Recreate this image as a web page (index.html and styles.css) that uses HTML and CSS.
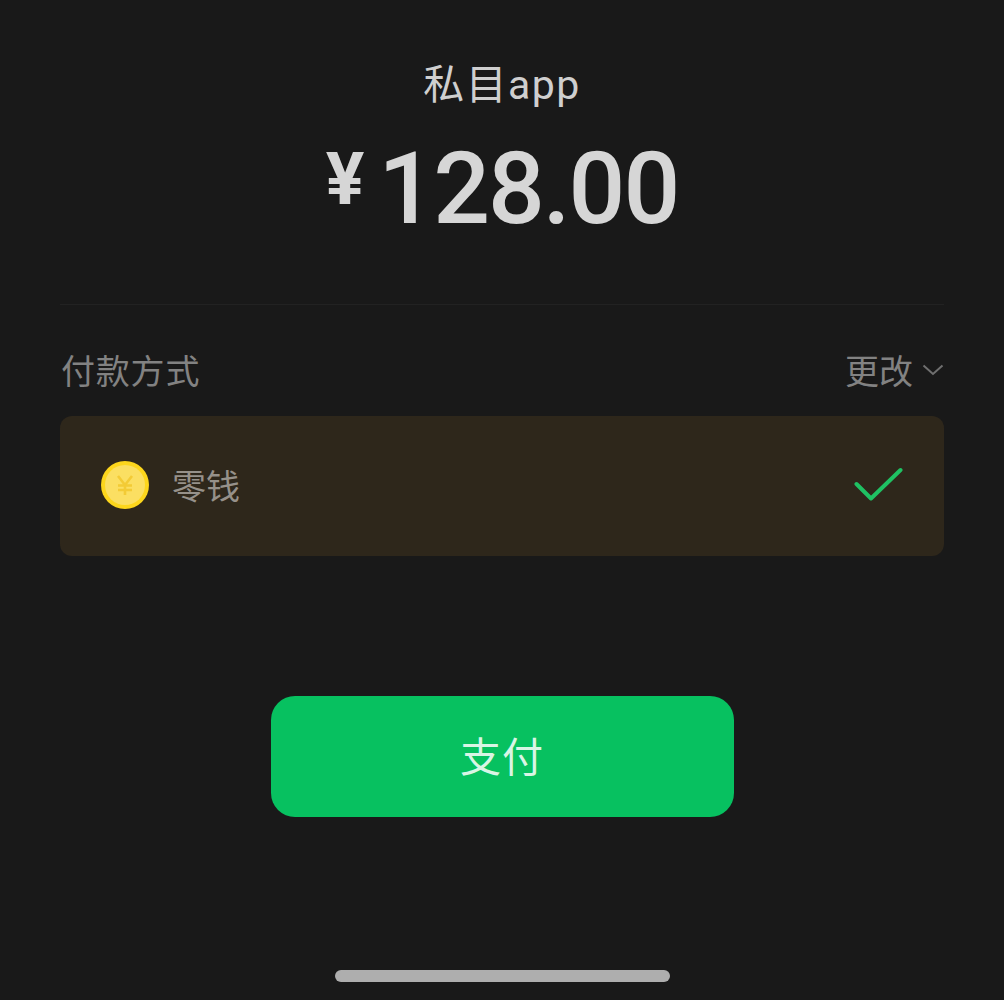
FILE: index.html
```html
<!DOCTYPE html>
<html lang="zh">
<head>
<meta charset="utf-8">
<title>支付</title>
<link rel="stylesheet" href="styles.css">
</head>
<body>
<main class="page">
  <header class="summary">
    <h1 class="merchant">私目app</h1>
    <div class="amount"><span class="currency">¥</span><span class="value">128.00</span></div>
  </header>
  <section class="method">
    <div class="method-head">
      <span class="method-title">付款方式</span>
      <span class="change">更改
        <svg class="chevron" width="22" height="12" viewBox="0 0 22 12"><path d="M1.5 1.5 L11 10 L20.5 1.5" fill="none" stroke="#6f6f6f" stroke-width="2"/></svg>
      </span>
    </div>
    <div class="wallet">
      <svg class="coin" width="48" height="48" viewBox="0 0 48 48">
        <circle cx="24" cy="24" r="24" fill="#fdd61c"/>
        <circle cx="24" cy="24" r="20" fill="#fbdf62"/>
        <path d="M17 15 L24 24 L31 15 M24 24 V34 M17 24.5 H31 M17 29 H31" fill="none" stroke="#f3cb35" stroke-width="2.6"/>
      </svg>
      <span class="wallet-name">零钱</span>
      <svg class="check" width="50" height="38" viewBox="0 0 50 38"><path d="M2.5 17 L17 31.500 L46.500 3" fill="none" stroke="#1fc163" stroke-width="4" stroke-linecap="round" stroke-linejoin="round"/></svg>
    </div>
  </section>
  <div class="actions"><button class="pay" type="button"><span class="pay-label">支付</span></button></div>
  <div class="home-indicator"></div>
</main>
</body>
</html>
```
FILE: styles.css
```css
* { box-sizing: border-box; }
html, body { margin: 0; height: 100%; }
body {
  background: #191919;
  font-family: "Noto Sans CJK SC", Roboto, sans-serif;
  overflow: hidden;
}
.page {
  height: 1000px;
  padding: 0 60px;
  display: flex;
  flex-direction: column;
}
.summary {
  height: 305px;
  padding-top: 58px;
  border-bottom: 1px solid #222222;
  display: flex;
  flex-direction: column;
  align-items: center;
}
.merchant {
  margin: 0;
  font-family: Roboto, "Noto Sans CJK SC", sans-serif;
  font-size: 41px;
  line-height: 54px;
  font-weight: 400;
  letter-spacing: 1.4px;
  color: #cfcfcf;
}
.amount {
  margin-top: 25px;
  display: flex;
  align-items: flex-start;
  color: #d6d6d6;
  font-family: Roboto, sans-serif;
  line-height: 104px;
}
.currency {
  font-size: 72px;
  font-weight: 700;
  line-height: 76px;
  margin-top: 5px;
  margin-right: 14px;
}
.value {
  font-size: 100px;
  font-weight: 500;
  letter-spacing: -2px;
}
.method-head {
  margin-top: 38px;
  height: 54px;
  display: flex;
  justify-content: space-between;
  align-items: center;
  font-size: 34px;
  line-height: 54px;
  color: #828282;
}
.method-title { letter-spacing: 0.8px; margin-left: 1px; }
.change {
  display: flex;
  align-items: center;
  gap: 9px;
}
.wallet {
  margin-top: 19px;
  height: 140px;
  border-radius: 12px;
  background: #2e271b;
  padding: 0 40px 2px 41px;
  display: flex;
  align-items: center;
}
.coin { flex: none; }
.check { flex: none; margin-top: 2px; }
.wallet-name {
  margin-left: 23px;
  margin-top: -1px;
  flex: 1;
  font-size: 34px;
  color: #96918a;
}
.actions {
  margin-top: 140px;
  display: flex;
  justify-content: center;
}
.pay {
  width: 463px;
  height: 121px;
  padding: 0 0 6px;
  border: 0;
  border-radius: 24px;
  background: #07c160;
  color: #d9f5e5;
  font-family: inherit;
  font-size: 41px;
}
.pay-label { letter-spacing: 1px; font-weight: 400; }
.home-indicator {
  width: 335px;
  height: 12px;
  margin: 153px auto 0;
  border-radius: 6px;
  background: #aeaeae;
}
```
